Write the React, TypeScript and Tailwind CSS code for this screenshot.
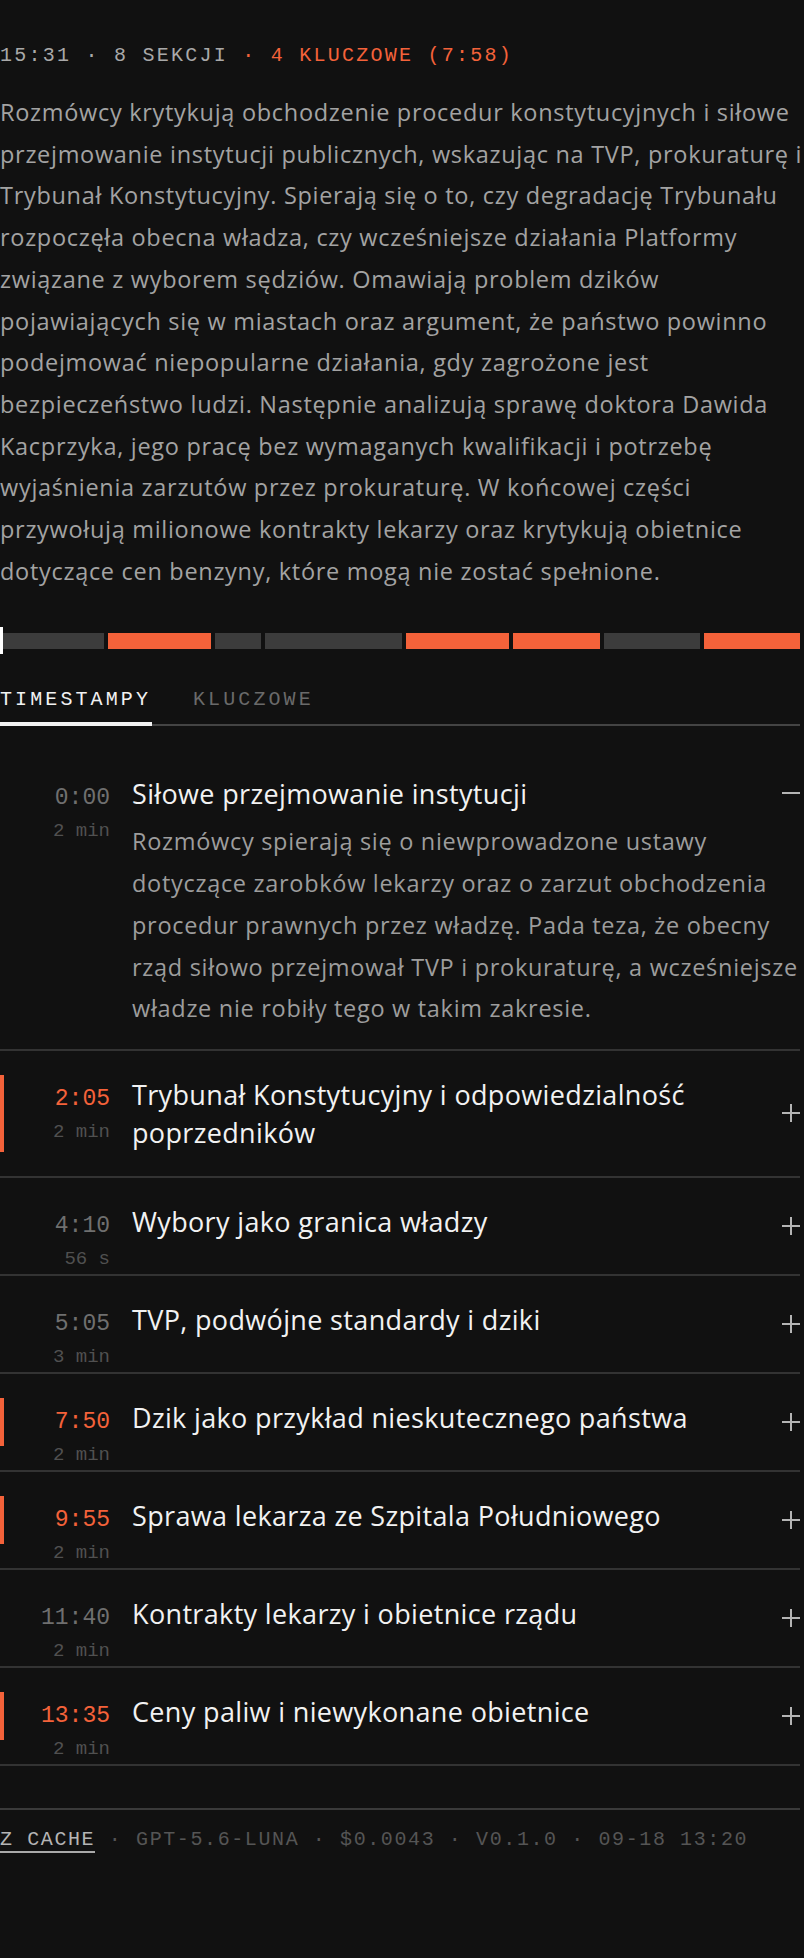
const sections = [
  {
    time: "0:00",
    len: "2 min",
    secs: 125,
    title: "Siłowe przejmowanie instytucji",
    key: false,
    open: true,
    body: "Rozmówcy spierają się o niewprowadzone ustawy dotyczące zarobków lekarzy oraz o zarzut obchodzenia procedur prawnych przez władzę. Pada teza, że obecny rząd siłowo przejmował TVP i prokuraturę, a wcześniejsze władze nie robiły tego w takim zakresie.",
  },
  {
    time: "2:05",
    len: "2 min",
    secs: 125,
    title: "Trybunał Konstytucyjny i odpowiedzialność poprzedników",
    key: true,
  },
  { time: "4:10", len: "56 s", secs: 55, title: "Wybory jako granica władzy", key: false },
  { time: "5:05", len: "3 min", secs: 165, title: "TVP, podwójne standardy i dziki", key: false },
  { time: "7:50", len: "2 min", secs: 125, title: "Dzik jako przykład nieskutecznego państwa", key: true },
  { time: "9:55", len: "2 min", secs: 105, title: "Sprawa lekarza ze Szpitala Południowego", key: true },
  { time: "11:40", len: "2 min", secs: 115, title: "Kontrakty lekarzy i obietnice rządu", key: false },
  { time: "13:35", len: "2 min", secs: 116, title: "Ceny paliw i niewykonane obietnice", key: true },
];

const summary =
  "Rozmówcy krytykują obchodzenie procedur konstytucyjnych i siłowe przejmowanie instytucji publicznych, wskazując na TVP, prokuraturę i Trybunał Konstytucyjny. Spierają się o to, czy degradację Trybunału rozpoczęła obecna władza, czy wcześniejsze działania Platformy związane z wyborem sędziów. Omawiają problem dzików pojawiających się w miastach oraz argument, że państwo powinno podejmować niepopularne działania, gdy zagrożone jest bezpieczeństwo ludzi. Następnie analizują sprawę doktora Dawida Kacprzyka, jego pracę bez wymaganych kwalifikacji i potrzebę wyjaśnienia zarzutów przez prokuraturę. W końcowej części przywołują milionowe kontrakty lekarzy oraz krytykują obietnice dotyczące cen benzyny, które mogą nie zostać spełnione.";

const mono = "font-['Liberation_Mono',monospace]";
const sans = "font-['Open_Sans',sans-serif]";

function ToggleIcon({ open }: { open?: boolean }) {
  return (
    <svg width="18" height="18" viewBox="0 0 18 18" fill="none" stroke="currentColor" strokeWidth="2">
      {!open && <path d="M9 0v18" />}
      <path d="M0 9h18" />
    </svg>
  );
}

function Row({ s }: { s: (typeof sections)[number] }) {
  return (
    <div className={`relative border-b-2 border-[#333] pt-6 ${s.open ? "pb-[19px]" : "pb-6"}`}>
      <div className="relative flex min-h-[48px] items-start">
        {s.key && <div className="absolute left-0 top-0 bottom-0 w-1 bg-[#f4623a]" />}
        <div className={`h-12 w-[110px] shrink-0 pt-[5px] text-right ${mono}`}>
          <div className={`text-[23px] leading-[38px] ${s.key ? "text-[#f4623a]" : "text-[#6f6f6f]"}`}>
            {s.time}
          </div>
          <div className="mt-[2px] text-[19px] leading-6 text-[#505050]">{s.len}</div>
        </div>
        <div
          className={`ml-[22px] mt-[1px] flex-1 pr-4 text-[27px] font-medium leading-[38px] tracking-[0.35px] text-[#f2f2f2] ${sans}`}
        >
          {s.title}
        </div>
        <div
          className={`flex w-12 shrink-0 items-center justify-end text-[#b5b5b5] ${s.open ? "h-[38px]" : "h-12 self-center"}`}
        >
          <ToggleIcon open={s.open} />
        </div>
      </div>
      {s.body && (
        <p
          className={`-mr-1 -mt-[1px] ml-[132px] text-[23.5px] leading-[41.7px] tracking-[0.7px] text-[#9d9d9d] ${sans}`}
        >
          {s.body}
        </p>
      )}
    </div>
  );
}

export default function App() {
  return (
    <div className="min-h-[1958px] bg-[#111111] pr-1 pt-[42px]">
      <div className={`text-[20px] leading-7 tracking-[2.25px] text-[#a9a9a9] ${mono}`}>
        15:31 · 8 SEKCJI <span className="text-[#f4623a]">· 4 KLUCZOWE (7:58)</span>
      </div>

      <p className={`-mr-1 mt-[22px] text-[23.5px] leading-[41.7px] tracking-[0.7px] text-[#a3a3a3] ${sans}`}>
        {summary}
      </p>

      <div className="relative mt-[41px] flex h-4 gap-1">
        {sections.map((s, i) => (
          <div
            key={i}
            className={s.key ? "bg-[#f4623a]" : "bg-[#3c3c3c]"}
            style={{ flexGrow: s.secs, flexBasis: 0 }}
          />
        ))}
        <div className="absolute left-0 -top-[6px] h-[27px] w-[3px] bg-white" />
      </div>

      <div
        className={`mt-9 flex gap-[41px] border-b-2 border-[#444] text-[20px] leading-[30px] tracking-[3.1px] ${mono}`}
      >
        <div className="-mb-[2px] w-[152px] border-b-4 border-[#f2f2f2] pb-[7px] text-[#f2f2f2]">TIMESTAMPY</div>
        <div className="pb-[7px] text-[#6a6a6a]">KLUCZOWE</div>
      </div>

      <div className="pt-6">
        {sections.map((s, i) => (
          <Row key={i} s={s} />
        ))}
      </div>

      <div
        className={`mt-[42px] border-t-2 border-[#3a3a3a] pt-4 text-[20px] leading-7 tracking-[1.6px] text-[#555] ${mono}`}
      >
        <span className="border-b-2 border-[#aaa] text-[#b5b5b5]">Z CACHE</span> · GPT-5.6-LUNA · $0.0043 · V0.1.0
        · 09-18 13:20
      </div>
    </div>
  );
}
